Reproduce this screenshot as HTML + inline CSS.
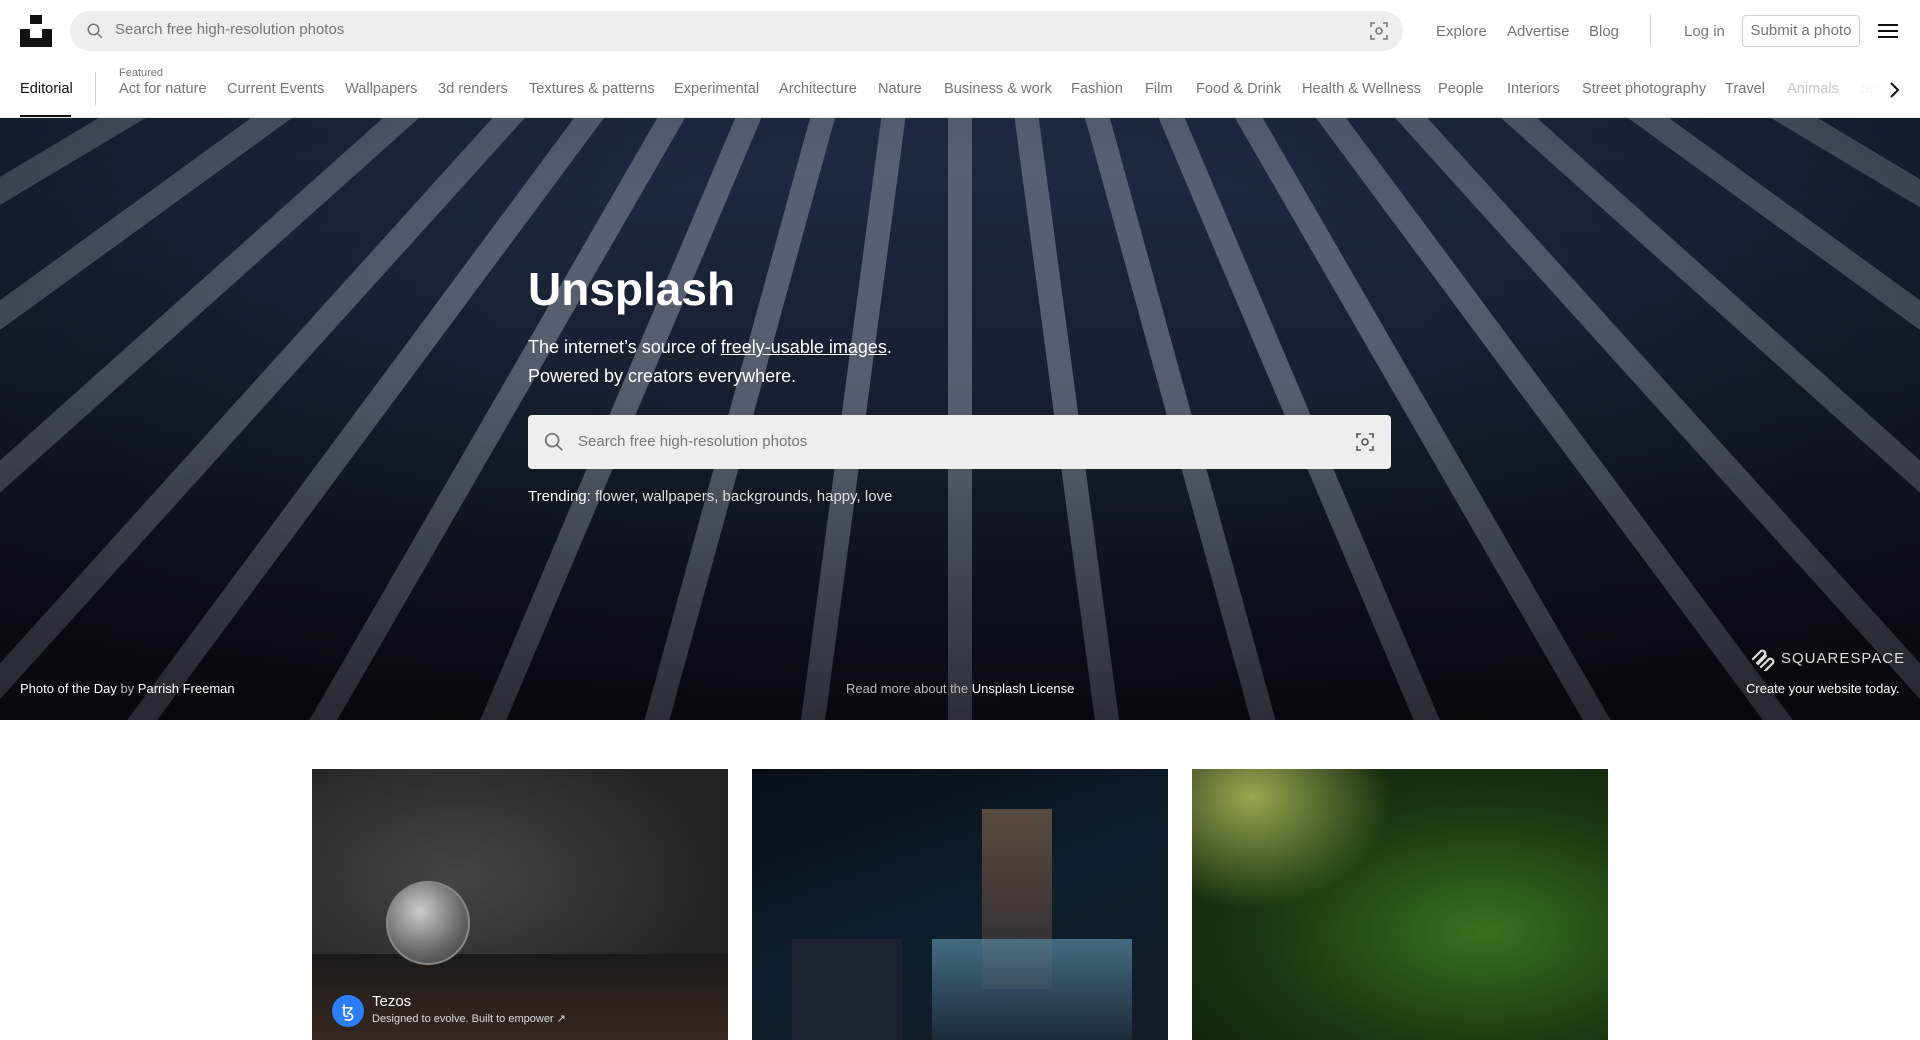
<!DOCTYPE html>
<html><head><meta charset="utf-8"><style>
*{box-sizing:border-box;margin:0;padding:0}
html,body{width:1920px;height:1040px;overflow:hidden}
body{font-family:"Liberation Sans",sans-serif;background:#fff;color:#111;position:relative}
.a{position:absolute}
.top a{color:#767676;font-size:15px;text-decoration:none}
.nav span{position:absolute;top:81px;font-size:14.6px;color:#767676;white-space:nowrap}
</style></head><body>
<div class="top">
<svg class="a" style="left:20px;top:15px" width="32" height="32" viewBox="0 0 32 32"><path d="M10 9V0h12v9H10zm12 5h10v18H0V14h10v9h12v-9z" fill="#111"/></svg>
<div class="a" style="left:70px;top:11px;width:1333px;height:40px;border-radius:20px;background:#eee"></div>
<svg class="a" style="left:86px;top:22px" width="18" height="18" viewBox="0 0 24 24" fill="none" stroke="#767676" stroke-width="2"><circle cx="10" cy="10" r="7"/><path d="M15 15l6 6"/></svg>
<div class="a" style="left:115px;top:21px;font-size:15px;color:#767676">Search free high-resolution photos</div>
<svg class="a" style="left:1369px;top:21px" width="20" height="20" viewBox="0 0 20 20" fill="none" stroke="#767676" stroke-width="1.6"><path d="M2 6V2h4M14 2h4v4M18 14v4h-4M6 18H2v-4"/><circle cx="10" cy="10" r="3"/></svg>
<a class="a" style="left:1436px;top:23px">Explore</a>
<a class="a" style="left:1507px;top:23px">Advertise</a>
<a class="a" style="left:1589px;top:23px">Blog</a>
<div class="a" style="left:1650px;top:14px;width:1px;height:32px;background:#d1d1d1"></div>
<a class="a" style="left:1684px;top:23px">Log in</a>
<div class="a" style="left:1742px;top:15px;width:118px;height:32px;border:1px solid #d1d1d1;border-radius:4px;font-size:15px;color:#767676;text-align:center;line-height:30px">Submit a photo</div>
<svg class="a" style="left:1878px;top:23px" width="20" height="16" viewBox="0 0 20 16"><path d="M0 2h20M0 8h20M0 14h20" stroke="#111" stroke-width="2"/></svg>
</div>
<div class="nav">
<span style="left:20px;color:#111">Editorial</span>
<div class="a" style="left:20px;top:115px;width:51px;height:2px;background:#111"></div>
<div class="a" style="left:95px;top:72px;width:1px;height:33px;background:#d1d1d1"></div>
<span style="left:119px;top:67px;font-size:11px">Featured</span>
<span style="left:119px">Act for nature</span><span style="left:227px">Current Events</span><span style="left:345px">Wallpapers</span><span style="left:438px">3d renders</span><span style="left:529px">Textures &amp; patterns</span><span style="left:674px">Experimental</span><span style="left:779px">Architecture</span><span style="left:878px">Nature</span><span style="left:944px">Business &amp; work</span><span style="left:1071px">Fashion</span><span style="left:1145px">Film</span><span style="left:1196px">Food &amp; Drink</span><span style="left:1302px">Health &amp; Wellness</span><span style="left:1438px">People</span><span style="left:1507px">Interiors</span><span style="left:1582px">Street photography</span><span style="left:1725px">Travel</span><span style="left:1787px;color:#c4c4c4">Animals</span><span style="left:1860px;color:#e4e4e4">Sp</span>
<div class="a" style="left:1830px;top:72px;width:90px;height:36px;background:linear-gradient(90deg,rgba(255,255,255,0),#fff 60%)"></div>
<svg class="a" style="left:1888px;top:81px" width="12" height="18" viewBox="0 0 12 18"><path d="M3 2l7 7-7 7" fill="none" stroke="#111" stroke-width="2"/></svg>
<div class="a" style="left:0;top:117px;width:1920px;height:1px;background:#e5e5e5"></div>
</div>
<div class="a" style="left:0;top:118px;width:1920px;height:602px;overflow:hidden;background:#161c28">
<svg width="1920" height="602" class="a" style="left:0;top:0">
<defs><linearGradient id="g" x1="0" y1="0" x2="0" y2="1"><stop offset="0" stop-color="#1f2a42"/><stop offset="1" stop-color="#0d111a"/></linearGradient>
<radialGradient id="v" cx="0.5" cy="0.3" r="0.75"><stop offset="0.3" stop-color="#000" stop-opacity="0"/><stop offset="1" stop-color="#000" stop-opacity="0.5"/></radialGradient></defs>
<rect width="1920" height="602" fill="url(#g)"/>
<g stroke="#8890a0" stroke-width="24" opacity="0.55">
<line x1="960" y1="-500" x2="-4000" y2="2460"/>
<line x1="960" y1="-500" x2="-2400" y2="1940"/>
<line x1="960" y1="-500" x2="-1500" y2="1700"/>
<line x1="960" y1="-500" x2="-900" y2="1560"/>
<line x1="960" y1="-500" x2="-450" y2="1400"/>
<line x1="960" y1="-500" x2="-80" y2="1300"/>
<line x1="960" y1="-500" x2="240" y2="1200"/>
<line x1="960" y1="-500" x2="520" y2="1100"/>
<line x1="960" y1="-500" x2="760" y2="1000"/>
<line x1="960" y1="-500" x2="960" y2="1000"/>
<line x1="960" y1="-500" x2="1160" y2="1000"/>
<line x1="960" y1="-500" x2="1400" y2="1100"/>
<line x1="960" y1="-500" x2="1680" y2="1200"/>
<line x1="960" y1="-500" x2="2000" y2="1300"/>
<line x1="960" y1="-500" x2="2370" y2="1400"/>
<line x1="960" y1="-500" x2="2820" y2="1560"/>
<line x1="960" y1="-500" x2="3420" y2="1700"/>
<line x1="960" y1="-500" x2="4320" y2="1940"/>
<line x1="960" y1="-500" x2="5900" y2="2460"/>
</g>
<rect width="1920" height="602" fill="url(#v)"/>
</svg>
<div class="a" style="left:528px;top:144px;font-size:46px;font-weight:bold;color:#fff">Unsplash</div>
<div class="a" style="left:528px;top:215px;font-size:18px;line-height:29px;color:#fff">The internet’s source of <u>freely-usable images</u>.<br>Powered by creators everywhere.</div>
<div class="a" style="left:528px;top:297px;width:863px;height:54px;background:#eee;border-radius:4px"></div>
<svg class="a" style="left:543px;top:313px" width="22" height="22" viewBox="0 0 24 24" fill="none" stroke="#767676" stroke-width="2"><circle cx="10" cy="10" r="7"/><path d="M15 15l6 6"/></svg>
<div class="a" style="left:578px;top:315px;font-size:15px;color:#767676">Search free high-resolution photos</div>
<svg class="a" style="left:1355px;top:314px" width="20" height="20" viewBox="0 0 20 20" fill="none" stroke="#555" stroke-width="1.6"><path d="M2 6V2h4M14 2h4v4M18 14v4h-4M6 18H2v-4"/><circle cx="10" cy="10" r="3"/></svg>
<div class="a" style="left:528px;top:370px;font-size:15px;color:#fff">Trending: <span style="color:#ddd">flower, wallpapers, backgrounds, happy, love</span></div>
<div class="a" style="left:20px;top:563px;font-size:13px;color:#fff">Photo of the Day <span style="color:#bbb">by</span> Parrish Freeman</div>
<div class="a" style="left:846px;top:563px;font-size:13px;color:#bbb">Read more about the <span style="color:#fff">Unsplash License</span></div>
<svg class="a" style="left:1750px;top:529px" width="26" height="24" viewBox="0 0 26 24" fill="none" stroke="#ddd" stroke-width="2.2" stroke-linecap="round"><path d="M3 12l8-8a3 3 0 014 4l-8 8M8 17l8-8M11 20l8-8a3 3 0 014 4l-8 8"/></svg>
<div class="a" style="left:1781px;top:532px;font-size:15px;letter-spacing:1px;color:#ddd">SQUARESPACE</div>
<div class="a" style="left:1746px;top:563px;font-size:13px;color:#fff">Create your website today.</div>
</div>
<div class="a" style="left:312px;top:769px;width:416px;height:271px;overflow:hidden;background:radial-gradient(ellipse at 35% 40%,#454547,#222224 70%)">
<div class="a" style="left:0;top:185px;width:416px;height:100px;background:linear-gradient(#1c1a19,#3a2a22)"></div>
<div class="a" style="left:74px;top:112px;width:84px;height:84px;border-radius:50%;background:radial-gradient(circle at 40% 35%,#ccc,#666 60%,#333);border:2px solid #888"></div>
<div class="a" style="left:20px;top:226px;width:32px;height:32px;border-radius:50%;background:#2c7df7;color:#fff;font-size:18px;text-align:center;line-height:32px">ꜩ</div>
<div class="a" style="left:60px;top:224px;font-size:15px;color:#fff">Tezos</div>
<div class="a" style="left:60px;top:243px;font-size:11px;color:#ddd">Designed to evolve. Built to empower ↗</div>
</div>
<div class="a" style="left:752px;top:769px;width:416px;height:271px;overflow:hidden;background:linear-gradient(160deg,#070d16,#0e1e2c 50%,#141c26)">
<div class="a" style="left:230px;top:40px;width:70px;height:180px;background:linear-gradient(#5a4a3e,#2a2a30)"></div>
<div class="a" style="left:180px;top:170px;width:200px;height:110px;background:linear-gradient(#5a8ca4,#1b2a3a);opacity:.7"></div>
<div class="a" style="left:40px;top:170px;width:110px;height:110px;background:#1c2230"></div>
</div>
<div class="a" style="left:1192px;top:769px;width:416px;height:271px;overflow:hidden;background:radial-gradient(ellipse at 70% 60%,#3a7020,#1b3a12 50%,#0d1a08)">
<div class="a" style="left:0;top:0;width:200px;height:140px;background:radial-gradient(ellipse at 30% 20%,#98a850,rgba(0,0,0,0) 70%)"></div>
</div>
</body></html>
